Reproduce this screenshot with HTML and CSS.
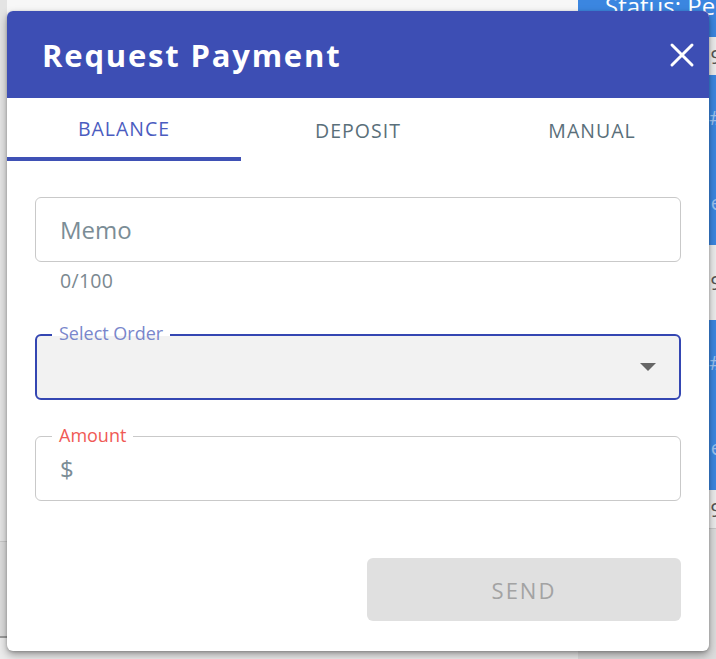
FILE: index.html
```html
<!DOCTYPE html>
<html>
<head>
<meta charset="utf-8">
<link rel="stylesheet" href="styles.css">
</head>
<body>
<div class="page">
  <div class="page-left">
    <div class="left-top"></div>
    <div class="left-band"></div>
    <div class="left-bottom"></div>
  </div>
  <div class="page-right">
    <div class="status">Status: Pending</div>
    <div class="row-grey"><span>9</span></div>
    <div class="row-blue"><span>#</span><span>e</span></div>
    <div class="row-grey tall"><span>9</span></div>
    <div class="row-blue"><span>#</span><span>e</span></div>
    <div class="row-grey"><span>9</span></div>
    <div class="row-dark"></div>
  </div>
</div>

<div class="modal">
  <div class="modal-header">
    <h1 class="modal-title">Request Payment</h1>
    <svg class="close" width="28" height="28" viewBox="0 0 28 28"><path d="M4 4 L24 24 M24 4 L4 24" stroke="#fff" stroke-width="3" stroke-linecap="round"/></svg>
  </div>
  <div class="tabs">
    <div class="tab active">BALANCE</div>
    <div class="tab">DEPOSIT</div>
    <div class="tab">MANUAL</div>
  </div>
  <div class="modal-body">
    <div class="field">
      <span class="placeholder">Memo</span>
    </div>
    <div class="helper">0/100</div>
    <div class="field select">
      <span class="legend blue">Select Order</span>
      <svg class="arrow" width="16" height="8" viewBox="0 0 16 8"><path d="M0 0 H16 L8 8 Z" fill="#666"/></svg>
    </div>
    <div class="field amount">
      <span class="legend red">Amount</span>
      <span class="placeholder">$</span>
    </div>
    <div class="actions">
      <button class="send">SEND</button>
    </div>
  </div>
</div>
</body>
</html>
```

FILE: styles.css
```css
html, body {
  margin: 0;
  padding: 0;
}
body {
  width: 716px;
  height: 659px;
  overflow: hidden;
  background: #f4f4f4;
  font-family: "Open Sans", "Lato", sans-serif;
  position: relative;
}
.page {
  display: flex;
  height: 659px;
}
.page-left {
  width: 578px;
  display: flex;
  flex-direction: column;
}
.left-top {
  height: 541px;
  background: linear-gradient(to right, #e4e4e4 0, #e4e4e4 7px, #f7f7f7 7px);
}
.left-band {
  height: 94px;
  border-top: 1px solid #c8c8c8;
  border-bottom: 2px solid #9a9a9a;
  background: #dcdcdc;
}
.left-bottom {
  flex: 1;
  background: #ececec;
}
.page-right {
  flex: 1;
  display: flex;
  flex-direction: column;
  min-width: 0;
}
.status {
  height: 37px;
  background: #3b86e0;
  color: #fff;
  font-family: "Open Sans", sans-serif;
  font-size: 24px;
  line-height: 12px;
  padding-left: 27px;
  white-space: nowrap;
  overflow: hidden;
}
.row-grey, .row-blue {
  display: flex;
  flex-direction: column;
  justify-content: space-around;
  align-items: flex-end;
  font-family: "Open Sans", sans-serif;
  font-size: 20px;
  overflow: hidden;
}
.row-grey {
  height: 38px;
  background: #ececec;
  color: #555;
}
.row-grey.tall {
  height: 75px;
}
.row-blue {
  height: 170px;
  background: #3b86e0;
  color: #9cc4f2;
}
.row-blue span, .row-grey span {
  margin-right: -6px;
}
.row-dark {
  flex: 1;
  border-top: 1px solid #c8c8c8;
  background: #dcdcdc;
}

/* modal */
.modal {
  position: absolute;
  left: 7px;
  top: 11px;
  width: 702px;
  height: 640px;
  background: #fff;
  border-radius: 6px;
  box-shadow: 0 4px 8px rgba(0,0,0,0.35), 0 1px 3px rgba(0,0,0,0.2);
  overflow: hidden;
  display: flex;
  flex-direction: column;
}
.modal-header {
  height: 87px;
  background: #3d4eb4;
  display: flex;
  align-items: center;
  justify-content: space-between;
  padding: 0 13px 0 35px;
  flex-shrink: 0;
}
.modal-title {
  margin: 0;
  color: #fff;
  font-size: 31px;
  font-weight: 700;
  letter-spacing: 1.8px;
}
.close {
  display: block;
}
.tabs {
  height: 63px;
  display: flex;
  flex-shrink: 0;
}
.tab {
  flex: 1;
  display: flex;
  align-items: center;
  justify-content: center;
  font-size: 19.5px;
  color: #5a6f7a;
  letter-spacing: 1px;
  box-sizing: border-box;
  padding-top: 2px;
}
.tab.active {
  color: #4b5cbf;
  border-bottom: 4px solid #3f51b5;
}
.modal-body {
  padding: 36px 28px 0 28px;
  display: flex;
  flex-direction: column;
}
.field {
  height: 65px;
  border: 1px solid #c9c9c9;
  border-radius: 6px;
  box-sizing: border-box;
  position: relative;
  display: flex;
  align-items: center;
  padding: 0 24px;
}
.placeholder {
  font-size: 24px;
  color: #7b8d96;
}
.helper {
  font-size: 19.5px;
  color: #7b8890;
  padding-left: 25px;
  height: 38px;
  line-height: 38px;
  letter-spacing: 0.3px;
}
.field.select {
  margin-top: 34px;
  height: 66px;
  border: 2px solid #3446b2;
  background: #f2f2f2;
  justify-content: flex-end;
  padding-right: 23px;
}
.field.amount {
  margin-top: 36px;
}
.legend {
  position: absolute;
  top: -13px;
  left: 16px;
  padding: 0 7px;
  font-size: 18px;
  line-height: 22px;
  background: #fff;
}
.field.select .legend {
  top: -14px;
  left: 15px;
  background: linear-gradient(to bottom, #fff 0, #fff 14px, #f2f2f2 14px);
}
.legend.blue {
  color: #7986cb;
}
.legend.red {
  color: #f05a55;
}
.arrow {
  display: block;
}
.actions {
  margin-top: 57px;
  display: flex;
  justify-content: flex-end;
}
.send {
  width: 314px;
  height: 63px;
  border: none;
  border-radius: 6px;
  background: #e0e0e0;
  color: #a3a3a3;
  font-family: "Open Sans", sans-serif;
  font-size: 22px;
  letter-spacing: 2px;
}
```
